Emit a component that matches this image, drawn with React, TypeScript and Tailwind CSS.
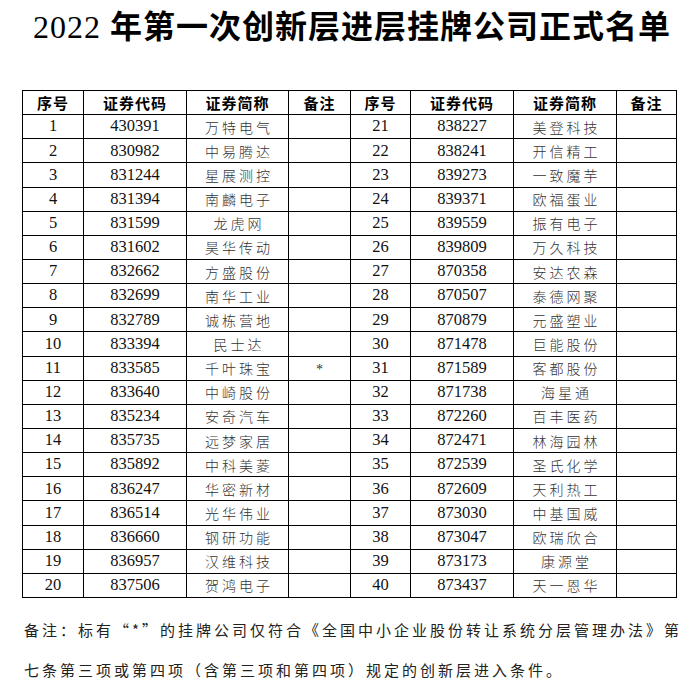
import React from 'react';

type Row = { no: number; code: string; name: string; note?: string };

const LEFT: Row[] = [
  { no: 1, code: '430391', name: '万特电气' },
  { no: 2, code: '830982', name: '中易腾达' },
  { no: 3, code: '831244', name: '星展测控' },
  { no: 4, code: '831394', name: '南麟电子' },
  { no: 5, code: '831599', name: '龙虎网' },
  { no: 6, code: '831602', name: '昊华传动' },
  { no: 7, code: '832662', name: '方盛股份' },
  { no: 8, code: '832699', name: '南华工业' },
  { no: 9, code: '832789', name: '诚栋营地' },
  { no: 10, code: '833394', name: '民士达' },
  { no: 11, code: '833585', name: '千叶珠宝', note: '*' },
  { no: 12, code: '833640', name: '中崎股份' },
  { no: 13, code: '835234', name: '安奇汽车' },
  { no: 14, code: '835735', name: '远梦家居' },
  { no: 15, code: '835892', name: '中科美菱' },
  { no: 16, code: '836247', name: '华密新材' },
  { no: 17, code: '836514', name: '光华伟业' },
  { no: 18, code: '836660', name: '钢研功能' },
  { no: 19, code: '836957', name: '汉维科技' },
  { no: 20, code: '837506', name: '贺鸿电子' },
];

const RIGHT: Row[] = [
  { no: 21, code: '838227', name: '美登科技' },
  { no: 22, code: '838241', name: '开信精工' },
  { no: 23, code: '839273', name: '一致魔芋' },
  { no: 24, code: '839371', name: '欧福蛋业' },
  { no: 25, code: '839559', name: '振有电子' },
  { no: 26, code: '839809', name: '万久科技' },
  { no: 27, code: '870358', name: '安达农森' },
  { no: 28, code: '870507', name: '泰德网聚' },
  { no: 29, code: '870879', name: '元盛塑业' },
  { no: 30, code: '871478', name: '巨能股份' },
  { no: 31, code: '871589', name: '客都股份' },
  { no: 32, code: '871738', name: '海星通' },
  { no: 33, code: '872260', name: '百丰医药' },
  { no: 34, code: '872471', name: '林海园林' },
  { no: 35, code: '872539', name: '圣氏化学' },
  { no: 36, code: '872609', name: '天利热工' },
  { no: 37, code: '873030', name: '中基国威' },
  { no: 38, code: '873047', name: '欧瑞欣合' },
  { no: 39, code: '873173', name: '康源堂' },
  { no: 40, code: '873437', name: '天一恩华' },
];

const HEADERS = ['序号', '证券代码', '证券简称', '备注', '序号', '证券代码', '证券简称', '备注'];
const COL_WIDTHS = ['w-[61px]', 'w-[103px]', 'w-[102px]', 'w-[62px]', 'w-[60px]', 'w-[103px]', 'w-[103px]', 'w-[60px]'];

const serif = "font-['Liberation_Serif','Noto_Sans_CJK_SC',serif]";
const cjk = "font-['Noto_Sans_CJK_SC',sans-serif]";

const Cells = ({ row }: { row: Row }) => (
  <>
    <td className={`border border-black p-0 text-center text-[16.5px] leading-none text-[#111] ${serif}`}>{row.no}</td>
    <td className={`border border-black p-0 text-center text-[16.5px] leading-none text-[#111] ${serif}`}>{row.code}</td>
    <td className={`border border-black p-0 pl-[3px] text-center text-[14px] leading-none font-light tracking-[3px] text-[#333] ${cjk}`}>
      {row.name}
    </td>
    <td className={`border border-black p-0 text-center text-[14px] leading-none text-[#333] ${serif}`}>
      {row.note && <span className="inline-block translate-y-[2px]">{row.note}</span>}
    </td>
  </>
);

export default function App() {
  return (
    <div className="min-h-[691px] w-[700px] bg-white text-black">
      <h1 className={`pt-[8px] pl-[4px] text-center text-[32px] leading-[32px] font-bold tracking-[1px] ${serif}`}>
        <span className="font-normal">2022</span> <span className={cjk}>年第一次创新层进层挂牌公司正式名单</span>
      </h1>

      <table className="mt-[47px] ml-[22px] w-[654px] table-fixed border-collapse border border-black">
        <colgroup>
          {COL_WIDTHS.map((w, i) => (
            <col key={i} className={w} />
          ))}
        </colgroup>
        <thead>
          <tr className="h-[24.15px]">
            {HEADERS.map((h, i) => (
              <th
                key={i}
                className={`border border-black p-0 text-center text-[15px] leading-none font-bold tracking-[1px] ${cjk}`}
              >
                {h}
              </th>
            ))}
          </tr>
        </thead>
        <tbody>
          {LEFT.map((row, i) => (
            <tr key={row.no} className="h-[24.15px]">
              <Cells row={row} />
              <Cells row={RIGHT[i]} />
            </tr>
          ))}
        </tbody>
      </table>

      <div className={`mt-[12px] pl-[24px] text-[15px] leading-[40px] tracking-[3px] whitespace-nowrap text-[#222] ${cjk}`}>
        <div>备注：标有“*”的挂牌公司仅符合《全国中小企业股份转让系统分层管理办法》第</div>
        <div>七条第三项或第四项（含第三项和第四项）规定的创新层进入条件。</div>
      </div>
    </div>
  );
}
